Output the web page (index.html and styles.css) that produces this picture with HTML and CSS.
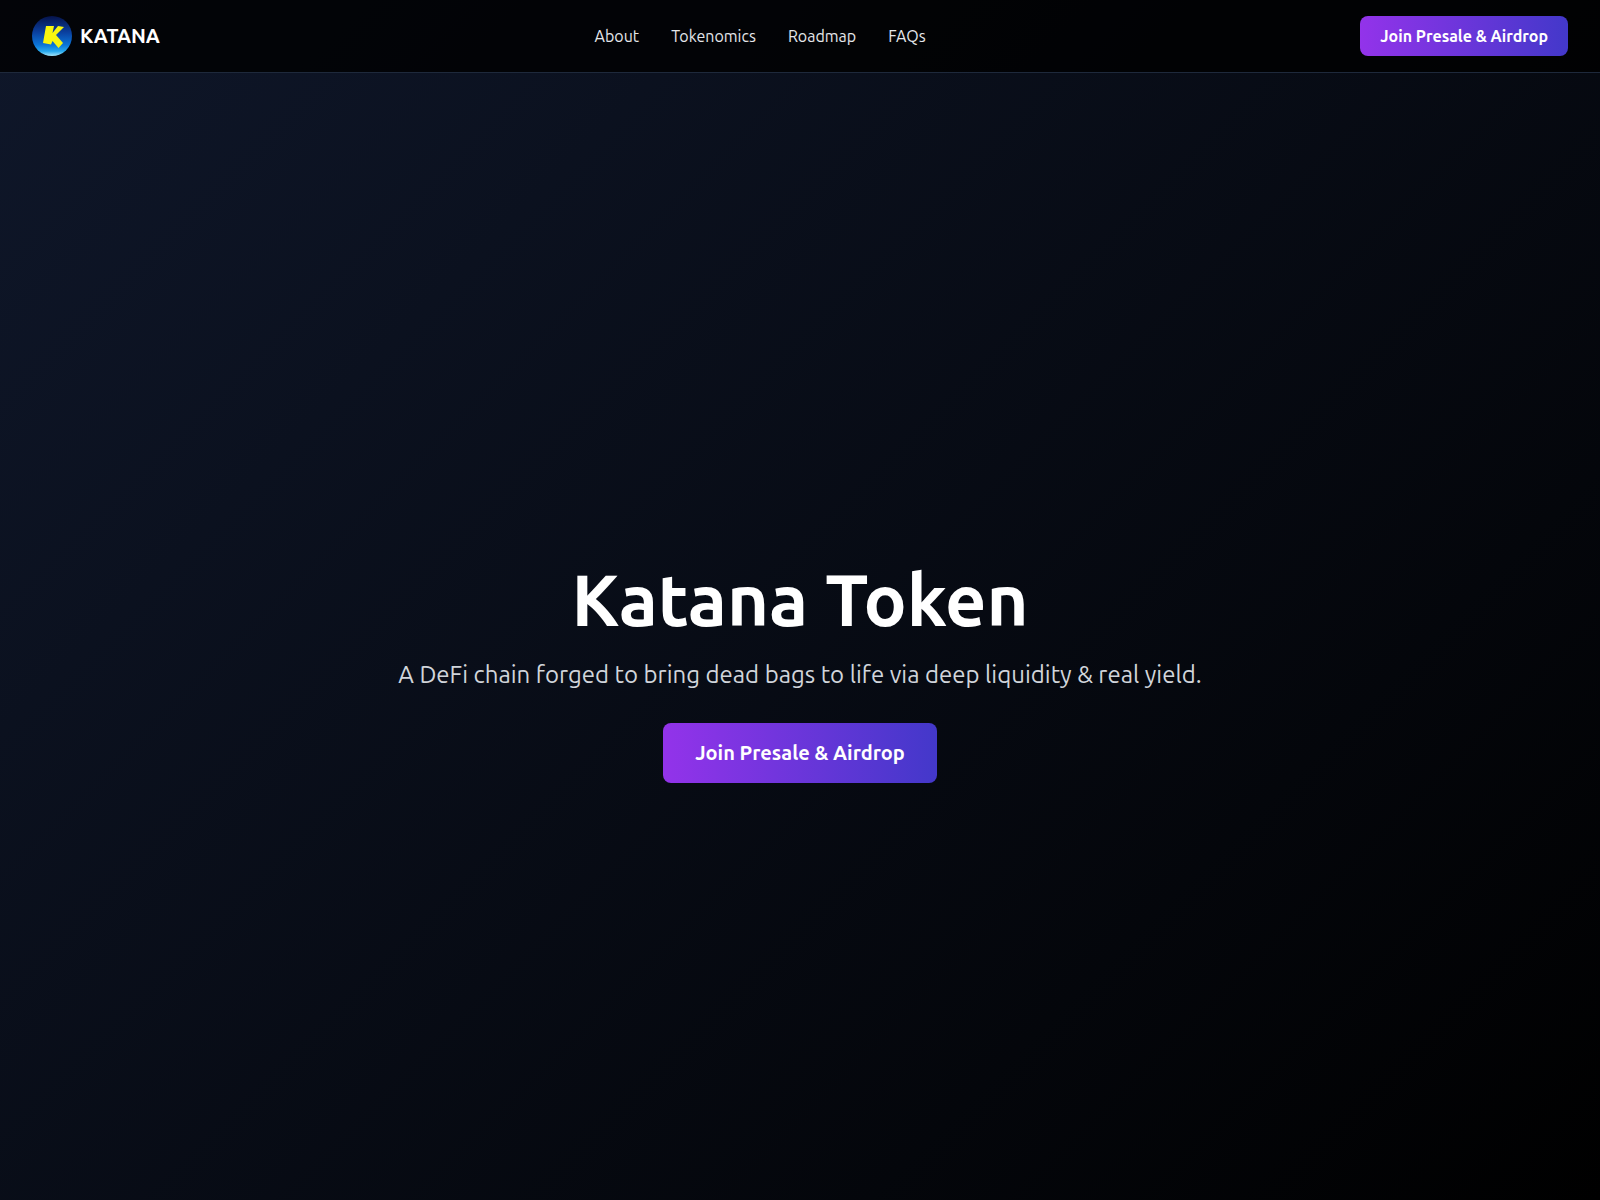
FILE: index.html
```html
<!DOCTYPE html>
<html lang="en">
<head>
    <meta charset="UTF-8">
    <meta name="viewport" content="width=device-width, initial-scale=1.0">
    <title>Katana Token</title>
    <link rel="stylesheet" href="styles.css">
</head>
<body>

    <header class="site-header">
        <a class="brand" href="#">
            <svg class="brand-logo" width="40" height="40" viewBox="0 0 40 40">
                <defs>
                    <linearGradient id="logoFill" x1="0" y1="0" x2="0" y2="1">
                        <stop offset="0" stop-color="#06134a"/>
                        <stop offset="0.4" stop-color="#0a3f9e"/>
                        <stop offset="0.72" stop-color="#0b74d8"/>
                        <stop offset="0.88" stop-color="#25a8ee"/>
                        <stop offset="1" stop-color="#a5e6fa"/>
                    </linearGradient>
                </defs>
                <circle cx="20" cy="20" r="20" fill="url(#logoFill)"/>
                <path d="M14 10l8 0-1.500 7 5.500-7 6 1-8 8 7 8-4.500 5-6-7-1.500 3.500-8-1.500z" fill="#f8f610"/>
            </svg>
            <span class="brand-name">KATANA</span>
        </a>
        <nav class="main-nav">
            <a href="#">About</a>
            <a href="#">Tokenomics</a>
            <a href="#">Roadmap</a>
            <a href="#">FAQs</a>
        </nav>
        <a class="btn btn-small" href="#">Join Presale &amp; Airdrop</a>
    </header>

    <main class="hero">
        <h1>Katana Token</h1>
        <p>A DeFi chain forged to bring dead bags to life via deep liquidity &amp; real yield.</p>
        <a class="btn btn-large" href="#">Join Presale &amp; Airdrop</a>
    </main>

</body>
</html>
```

FILE: styles.css
```css
* {
    box-sizing: border-box;
}

body {
    margin: 0;
    min-height: 1200px;
    display: flex;
    flex-direction: column;
    background: linear-gradient(135deg, #0f172a 0%, #000 100%);
    color: #fff;
    font-family: Ubuntu, "Noto Sans", "Open Sans", sans-serif;
}

a {
    color: inherit;
    text-decoration: none;
}

.site-header {
    height: 73px;
    padding: 0 32px;
    display: flex;
    align-items: center;
    justify-content: space-between;
    background-color: rgba(0, 0, 0, 0.8);
    border-bottom: 1px solid #1e293b;
}

.brand {
    display: flex;
    align-items: center;
    gap: 8px;
}

.brand-name {
    font-size: 20px;
    line-height: 28px;
    font-weight: 600;
}

.main-nav {
    display: flex;
    gap: 32px;
    font-size: 16px;
    color: #e5e7eb;
}

.btn {
    display: block;
    background: linear-gradient(90deg, #9333ea, #4338ca);
    color: #fff;
    font-weight: 600;
    border-radius: 8px;
}

.btn-small {
    padding: 10px 20px;
    font-size: 16px;
    line-height: 20px;
}

.btn-large {
    padding: 16px 32px;
    font-size: 20px;
    line-height: 28px;
}

.hero {
    flex: 1;
    display: flex;
    flex-direction: column;
    align-items: center;
    justify-content: flex-start;
    padding-top: 487px;
}

.hero h1 {
    margin: 0 0 19px;
    font-size: 72px;
    line-height: 80px;
    font-weight: 600;
}

.hero p {
    margin: 0 0 32px;
    font-size: 24px;
    line-height: 32px;
    color: #d1d5db;
}
```
